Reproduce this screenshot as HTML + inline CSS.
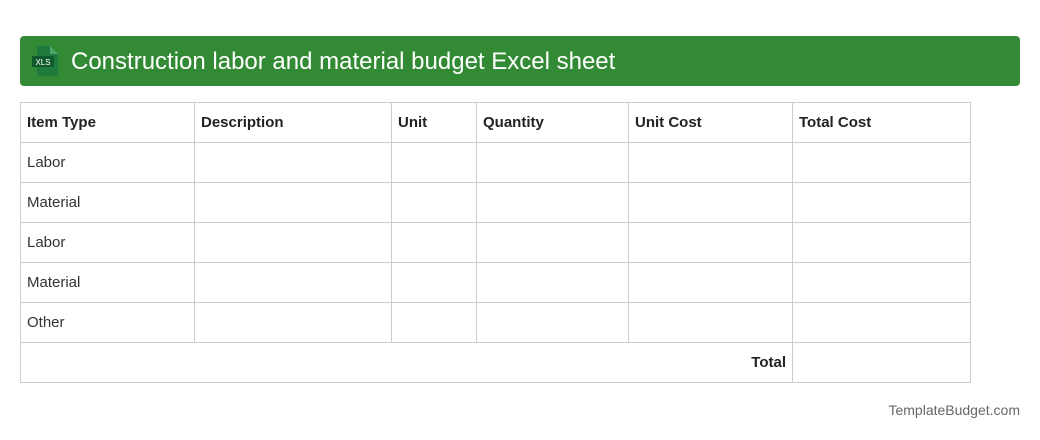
<!DOCTYPE html>
<html><head><style>
body{margin:0;background:#fff;width:1040px;height:440px;position:relative;font-family:"Liberation Sans",Roboto,sans-serif;}
.hdr{position:absolute;left:20px;top:36px;width:1000px;height:50px;background:#338a35;border-radius:4px;}
.hdr .t{position:absolute;left:51px;top:12px;color:#fff;font-size:24px;line-height:28px;}
table{position:absolute;left:20px;top:102px;border-collapse:collapse;font-size:15px;color:#333;}
td{border:1px solid #ccc;height:40px;padding:0 0 0 6px;box-sizing:border-box;}
tr{height:40px;}
tr:first-child td{font-weight:bold;color:#222;}
.foot{position:absolute;right:20px;top:402px;font-size:14px;color:#666;}
</style></head><body>
<div class="hdr">
<svg style="position:absolute;left:12px;top:10px" width="28" height="30" viewBox="0 0 28 30">
<path d="M5 0h13l8 8v22H5z" fill="#1f7a3d"/><path d="M18 0v8h8z" fill="#4aa86a"/>
<rect x="0" y="10" width="22" height="11" fill="#0f5a2b"/>
<text x="11" y="19" font-size="8" fill="#fff" text-anchor="middle" font-family="Liberation Sans">XLS</text>
</svg>
<div class="t">Construction labor and material budget Excel sheet</div></div>
<table>
<colgroup><col style="width:174px"><col style="width:197px"><col style="width:85px"><col style="width:152px"><col style="width:164px"><col style="width:178px"></colgroup>
<tr><td>Item Type</td><td>Description</td><td>Unit</td><td>Quantity</td><td>Unit Cost</td><td>Total Cost</td></tr>
<tr><td>Labor</td><td></td><td></td><td></td><td></td><td></td></tr>
<tr><td>Material</td><td></td><td></td><td></td><td></td><td></td></tr>
<tr><td>Labor</td><td></td><td></td><td></td><td></td><td></td></tr>
<tr><td>Material</td><td></td><td></td><td></td><td></td><td></td></tr>
<tr><td>Other</td><td></td><td></td><td></td><td></td><td></td></tr>
<tr><td colspan="5" style="text-align:right;padding-right:6px;font-weight:bold;color:#222">Total</td><td></td></tr>
</table>
<div class="foot">TemplateBudget.com</div>
</body></html>
